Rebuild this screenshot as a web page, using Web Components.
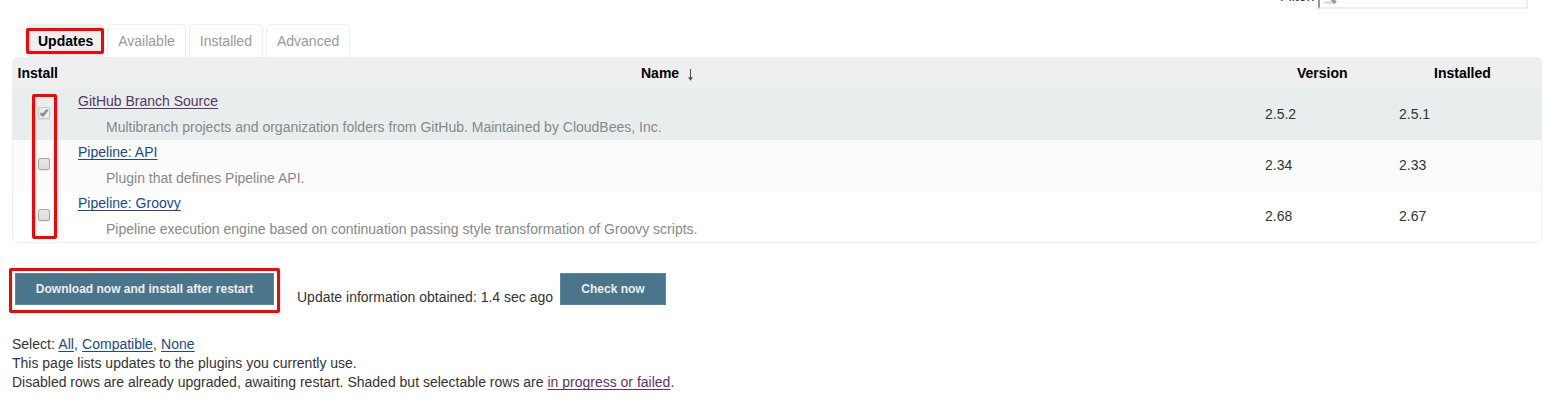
<!DOCTYPE html>
<html lang="en">
<head>
<meta charset="utf-8">
<title>Update Center</title>
<style>
html{overflow:hidden}
body{margin:0;background:#fff;color:#333;font:14px/19px "Liberation Sans",Arial,sans-serif;height:406px;overflow:hidden}
</style>
</head>
<body>
<plugin-manager></plugin-manager>
<script>
function define(name, html, init) {
  const template = document.createElement('template');
  template.innerHTML = html;
  customElements.define(name, class extends HTMLElement {
    constructor() {
      super();
      this.attachShadow({mode: 'open'}).append(template.content.cloneNode(true));
    }
    connectedCallback() { if (init) init(this, this.shadowRoot); }
  });
}

define('text-link', `<style>
:host{display:inline}
a{color:#204a87;text-decoration:underline;text-underline-offset:2px;text-decoration-thickness:1px;text-decoration-skip-ink:none}
:host([visited]) a{color:#5c3566}
</style><a><slot></slot></a>`);

define('mark-frame', `<style>
:host{display:block;position:absolute;box-sizing:border-box;border:3px solid #f00;border-radius:2px;pointer-events:none}
</style>`);

define('filter-box', `<style>
:host{display:flex;justify-content:flex-end;align-items:flex-end;height:9px;overflow:hidden}
span{margin:0 3px 5px 0;line-height:16px}
.input{display:flex;align-items:flex-end;box-sizing:border-box;width:210px;height:24px;border:2px solid #eee;border-left-color:#999;border-top-color:#999;padding-left:3px}
svg{display:block;margin-bottom:3px}
</style><span>Filter:</span><div class="input"><svg width="15" height="14" viewBox="0 0 15 14"><ellipse cx="6.5" cy="12.6" rx="6.5" ry="1.4" fill="#ddd"/><path d="M7 7l5.5 6" stroke="#999" stroke-width="3.4"/><circle cx="5" cy="5" r="4" fill="#eee" stroke="#aaa"/></svg></div>`);

define('tab-item', `<style>
:host{display:block;box-sizing:border-box;height:33px;padding:7px 10px 0;border:1px solid #eee;border-bottom:0;border-radius:5px 5px 0 0;color:#999;background:#fff}
:host([active]){background:#efefef;color:#000;font-weight:bold;position:relative}
mark-frame{left:-2px;right:-1px;top:3px;height:26px}
</style><slot></slot>`, (el, root) => {
  if (el.hasAttribute('active') && !root.querySelector('mark-frame')) root.append(document.createElement('mark-frame'));
});

define('tab-bar', `<style>
:host{display:flex;gap:3px;padding:15px 0 0 15px}
</style><slot></slot>`);

define('check-box', `<style>
:host{display:block;width:12px;height:12px}
svg{display:none}
.box{box-sizing:border-box;width:12px;height:12px;border:1px solid #a4a4a4;border-radius:2px;background:linear-gradient(#e8e8e8,#dcdcdc);box-shadow:0 1px 1px #0001}
:host([checked]) .box{border-color:#c2c8c7;background:#ebeeed}
:host([checked]) svg{display:block}
</style><div class="box"><svg width="10" height="10" viewBox="0 0 10 10"><path d="M1.4 5.2L3.9 7.4L8.4 1.8" fill="none" stroke="#8f9191" stroke-width="2.6"/></svg></div>`);

define('plugin-row', `<style>
:host{display:grid;grid-template-columns:61px 1187px 134px 1fr;height:51px;background:var(--row,#fff)}
check-box{margin:18px 0 0 25px}
.name{padding:3px 0 0 4px}
.desc{color:#888;padding:7px 0 0 28px}
.num{padding:16px 0 0 4px}
</style><check-box></check-box><div class="name"><text-link></text-link><div class="desc"><slot></slot></div></div><div class="num v"></div><div class="num i"></div>`, (el, root) => {
  const link = root.querySelector('text-link');
  link.textContent = el.getAttribute('name');
  root.querySelector('.v').textContent = el.getAttribute('version');
  root.querySelector('.i').textContent = el.getAttribute('installed');
  if (el.hasAttribute('pending')) {
    link.setAttribute('visited', '');
    root.querySelector('check-box').setAttribute('checked', '');
  }
});

define('plugin-table', `<style>
:host{display:block;position:relative;box-sizing:border-box;width:1530px;height:186px;border:1px solid #efefef;border-top:0;border-radius:5px;overflow:hidden}
header{display:grid;grid-template-columns:61px 1187px 134px 1fr;height:32px;margin:0 -1px;padding:0 1px;background:#efefef;color:#000;font-weight:bold}
header div{padding-top:7px}
.install{padding-left:4.5px}
.name{padding-left:567px}
.version{padding-left:36px}
.installed{padding-left:39px}
svg{margin-left:9px;vertical-align:-3px}
mark-frame{left:19px;top:37px;width:25px;height:145px}
</style><header><div class="install">Install</div><div class="name">Name<svg width="5" height="12" viewBox="0 0 5 12"><path d="M2.5 0v10" stroke="#4d465d"/><path d="M0 8.3h5L2.5 11.8z" fill="#4d465d"/></svg></div><div class="version">Version</div><div class="installed">Installed</div></header><slot></slot><mark-frame></mark-frame>`);

define('action-button', `<style>
:host{display:block}
button{display:block;box-sizing:border-box;width:106px;height:32px;margin:0;padding:0;border:1px solid #5788a1;border-radius:0;background:#4b758b;color:#eee;font:bold 12px/30px "Liberation Sans",Arial,sans-serif;white-space:nowrap}
:host([wide]) button{width:259px}
</style><button><slot></slot></button>`);

define('action-bar', `<style>
:host{display:flex;padding:30px 0 0 3px}
.main{position:relative}
mark-frame{left:-6px;top:-5px;width:271px;height:45px}
.info{padding:15px 7px 0 23px;white-space:nowrap;width:256px}
</style><div class="main"><action-button wide>Download now and install after restart</action-button><mark-frame></mark-frame></div><div class="info">Update information obtained: 1.4 sec ago</div><action-button>Check now</action-button>`);

define('page-notes', `<style>
:host{display:block;padding-top:28px}
.select{word-spacing:.4px}
</style><div class="select">Select: <text-link>All</text-link>, <text-link>Compatible</text-link>, <text-link>None</text-link></div>
<div>This page lists updates to the plugins you currently use.</div>
<div>Disabled rows are already upgraded, awaiting restart. Shaded but selectable rows are <text-link visited>in progress or failed</text-link>.</div>`);

define('plugin-manager', `<style>
:host{display:block;width:1544px;padding-left:12px}
filter-box{width:1516px}
.pending{--row:#e8eeed}
.alt{--row:#fbfbfb}
</style>
<filter-box></filter-box>
<tab-bar><tab-item active>Updates</tab-item><tab-item>Available</tab-item><tab-item>Installed</tab-item><tab-item>Advanced</tab-item></tab-bar>
<plugin-table>
<plugin-row class="pending" pending name="GitHub Branch Source" version="2.5.2" installed="2.5.1">Multibranch projects and organization folders from GitHub. Maintained by CloudBees, Inc.</plugin-row>
<plugin-row class="alt" name="Pipeline: API" version="2.34" installed="2.33">Plugin that defines Pipeline API.</plugin-row>
<plugin-row name="Pipeline: Groovy" version="2.68" installed="2.67">Pipeline execution engine based on continuation passing style transformation of Groovy scripts.</plugin-row>
</plugin-table>
<action-bar></action-bar>
<page-notes></page-notes>`);
</script>
</body>
</html>
